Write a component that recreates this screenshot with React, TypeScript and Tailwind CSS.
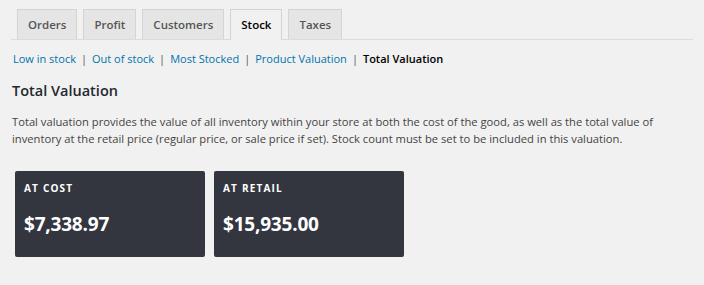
import React from "react";

const tabs = ["Orders", "Profit", "Customers", "Stock", "Taxes"];
const links = ["Low in stock", "Out of stock", "Most Stocked", "Product Valuation"];

export default function App() {
  return (
    <div
      className="w-[704px] h-[285px] bg-[#f1f1f1] text-[#444] overflow-hidden"
      style={{ fontFamily: '"Open Sans", sans-serif' }}
    >
      <div className="pl-[11px] pr-[11px] pt-[10px]">
        <div className="flex items-end gap-[6px] pl-[6px] border-b border-[#dcdcdc] h-[30px]">
          {tabs.map((t) => (
            <div
              key={t}
              className={
                "h-[30px] px-[10px] flex items-center text-[11.5px] font-semibold border border-b-0 border-[#d4d4d4] leading-none " +
                (t === "Stock"
                  ? "bg-[#f1f1f1] text-black h-[31px] -mb-px"
                  : "bg-[#e5e5e5] text-[#555]")
              }
            >
              {t}
            </div>
          ))}
        </div>
      </div>
      <div className="px-[13px] mt-[10px] text-[11px] leading-[18px] flex items-center">
        {links.map((l) => (
          <React.Fragment key={l}>
            <span className="text-[#0073aa]">{l}</span>
            <span className="text-[#555] mx-[5px]">|</span>
          </React.Fragment>
        ))}
        <span className="font-semibold text-black">Total Valuation</span>
      </div>
      <div className="px-[12px] mt-[13px] text-[14.5px] font-semibold text-[#23282d] leading-[20px]">
        Total Valuation
      </div>
      <p className="px-[12px] mt-[12px] text-[11.2px] leading-[17px] text-[#444] w-[680px]">
        Total valuation provides the value of all inventory within your store at both the cost of the good, as well as the total value of inventory at the retail price (regular price, or sale price if set). Stock count must be set to be included in this valuation.
      </p>
      <div className="flex gap-[9px] pl-[15px] mt-[24px]">
        {[
          ["At Cost", "$7,338.97"],
          ["At Retail", "$15,935.00"],
        ].map(([label, value]) => (
          <div
            key={label}
            className="w-[190px] h-[86px] bg-[#33363f] rounded-[2px] px-[9px] pt-[11px] text-white"
          >
            <div className="text-[10px] font-bold uppercase tracking-[1.2px] leading-[12px]">
              {label}
            </div>
            <div className="mt-[18px] text-[19px] font-bold leading-[24px] tracking-[-0.2px]">{value}</div>
          </div>
        ))}
      </div>
    </div>
  );
}
